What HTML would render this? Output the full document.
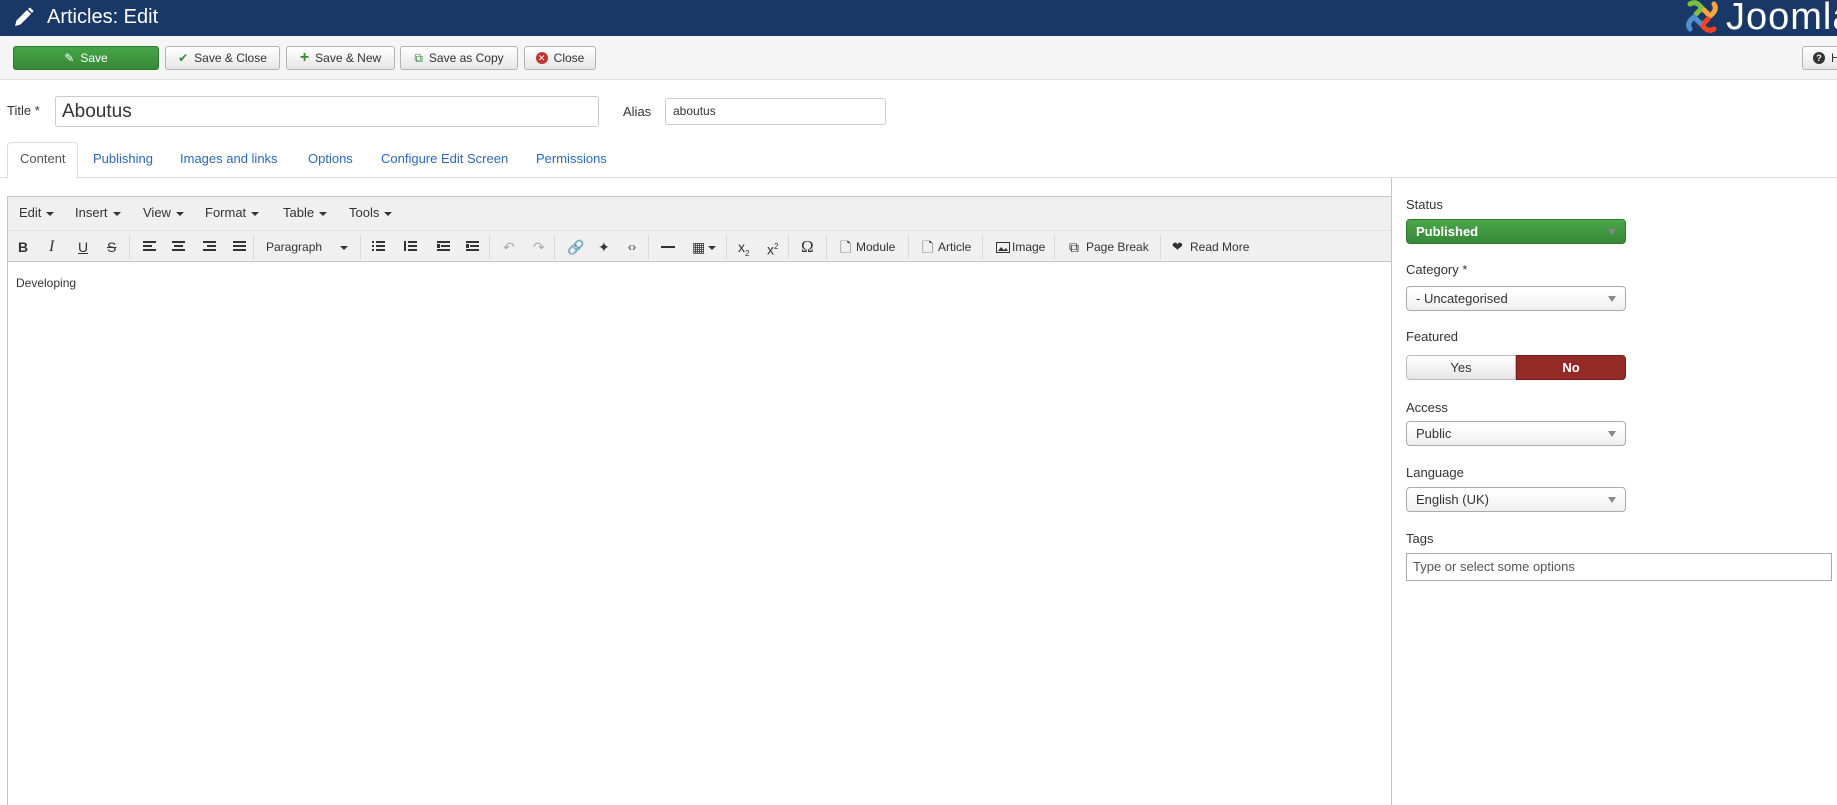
<!DOCTYPE html>
<html style="height:805px;overflow:hidden"><head><meta charset="utf-8"><style>
*{box-sizing:border-box;margin:0;padding:0}
body{width:1837px;height:805px;overflow:hidden;background:#fff;font-family:"Liberation Sans",Arial,sans-serif;color:#333;position:relative;font-size:14px}
.a{position:absolute}
.hdr{left:0;top:0;width:1837px;height:36px;background:#1a3867}
.tb{left:0;top:36px;width:1837px;height:44px;background:#f5f5f5;border-bottom:1px solid #ddd}
.btn{position:absolute;top:46px;height:24px;border:1px solid #b3b3b3;border-radius:3px;background:linear-gradient(#fff,#e6e6e6);font-size:12px;line-height:22px;color:#333;display:flex;align-items:center;justify-content:center;gap:6px}
.lbl{position:absolute;font-size:13px;color:#333}
.inp{position:absolute;border:1px solid #ccc;border-radius:3px;background:#fff}
.tab{position:absolute;top:151px;font-size:13px;color:#2a69b8}
.sel{position:absolute;left:1406px;width:220px;height:25px;border:1px solid #aaa;border-radius:4px;background:linear-gradient(#fff 20%,#eee);font-size:13px;line-height:23px;padding-left:9px;color:#333}
.sel:after{content:"";position:absolute;right:9px;top:9px;border:4px solid transparent;border-top:6px solid #888}
.mi{position:absolute;top:205px;font-size:13px;color:#333}
.car:after{content:"";display:inline-block;margin-left:5px;vertical-align:middle;border:4px solid transparent;border-top:4px solid #333;border-bottom:0}
.ic{position:absolute;top:238px;font-size:14px;color:#333;line-height:18px}
.sep{position:absolute;top:235px;width:1px;height:24px;background:#d9d9d9}
.t{position:absolute;top:240px;font-size:12px;color:#333}
</style></head><body>
<div class="a hdr"></div>
<svg class="a" style="left:12px;top:7px" width="22" height="22" viewBox="0 0 22 22"><path d="M3 19 L4.5 13.5 L15 3 L19 7 L8.5 17.5 Z" fill="#fff"/><path d="M16 2 L18 0.5 L21.5 4 L20 6 Z" fill="#fff"/></svg>
<div class="a" style="left:47px;top:6px;color:#fff;font-size:20px">Articles: Edit</div>
<svg class="a" style="left:1684px;top:0" width="36" height="33" viewBox="0 0 36 33">
<path d="M6 4 Q12 0 18 8 L12 14" stroke="#7ac143" stroke-width="5" fill="none" stroke-linecap="round"/>
<path d="M30 4 Q34 10 26 16 L20 10" stroke="#f9a541" stroke-width="5" fill="none" stroke-linecap="round"/>
<path d="M30 29 Q24 33 18 25 L24 19" stroke="#f44321" stroke-width="5" fill="none" stroke-linecap="round"/>
<path d="M6 29 Q2 23 10 17 L16 23" stroke="#5091cd" stroke-width="5" fill="none" stroke-linecap="round"/>
</svg>
<div class="a" style="left:1726px;top:-4px;color:#fff;font-size:38px;letter-spacing:1px">Joomla</div>
<div class="a tb"></div>
<div class="btn" style="left:13px;width:146px;background:linear-gradient(#46a546,#378837);border-color:#2f7a2f;color:#fff"><span style="font-size:12px">&#9998;</span>Save</div>
<div class="btn" style="left:165px;width:115px"><span style="color:#378837">&#10004;</span>Save &amp; Close</div>
<div class="btn" style="left:286px;width:109px"><span style="color:#378837;font-weight:bold;font-size:16px">+</span>Save &amp; New</div>
<div class="btn" style="left:400px;width:118px"><span style="color:#378837;font-size:12px">&#10697;</span>Save as Copy</div>
<div class="btn" style="left:524px;width:72px"><span style="display:inline-block;width:12px;height:12px;border-radius:50%;background:#bd362f;color:#fff;font-size:9px;line-height:12px;text-align:center">&#10005;</span>Close</div>
<div class="btn" style="left:1802px;width:60px;justify-content:flex-start;padding-left:10px"><span style="display:inline-block;width:12px;height:12px;border-radius:50%;background:#333;color:#fff;font-size:9px;line-height:12px;text-align:center;font-weight:bold">?</span>Help</div>

<div class="lbl" style="left:7px;top:103px">Title *</div>
<div class="inp" style="left:55px;top:96px;width:544px;height:31px;font-size:19px;line-height:29px;padding-left:6px">Aboutus</div>
<div class="lbl" style="left:623px;top:104px">Alias</div>
<div class="inp" style="left:665px;top:98px;width:221px;height:27px;font-size:12px;line-height:25px;padding-left:7px">aboutus</div>

<div class="a" style="left:0;top:177px;width:1837px;height:1px;background:#ddd"></div>
<div class="a" style="left:7px;top:142px;width:71px;height:37px;border:1px solid #ddd;border-bottom:1px solid #fff;border-radius:4px 4px 0 0;background:#fff"></div>
<div class="tab" style="left:20px;color:#555">Content</div>
<div class="tab" style="left:93px">Publishing</div>
<div class="tab" style="left:180px">Images and links</div>
<div class="tab" style="left:308px">Options</div>
<div class="tab" style="left:381px">Configure Edit Screen</div>
<div class="tab" style="left:536px">Permissions</div>

<div class="a" style="left:7px;top:196px;width:1385px;height:610px;border:1px solid #c5c5c5;background:#fff"></div>
<div class="a" style="left:8px;top:197px;width:1383px;height:65px;background:#f0f0f0;border-bottom:1px solid #c5c5c5"></div>
<div class="a" style="left:8px;top:230px;width:1383px;height:1px;background:#e2e2e2"></div>
<div class="mi car" style="left:19px">Edit</div>
<div class="mi car" style="left:75px">Insert</div>
<div class="mi car" style="left:143px">View</div>
<div class="mi car" style="left:205px">Format</div>
<div class="mi car" style="left:283px">Table</div>
<div class="mi car" style="left:349px">Tools</div>

<div class="ic" style="left:18px;font-weight:bold">B</div>
<div class="ic" style="left:49px;font-style:italic;font-family:'Liberation Serif',serif;font-size:16px">I</div>
<div class="ic" style="left:78px;text-decoration:underline">U</div>
<div class="ic" style="left:107px;text-decoration:line-through">S</div>
<div class="sep" style="left:129px"></div>
<svg class="a" style="left:143px;top:241px" width="110" height="12"><g fill="#333"><rect x="0" y="0" width="13" height="2"/><rect x="0" y="4" width="9" height="2"/><rect x="0" y="8" width="13" height="2"/><rect x="29" y="0" width="13" height="2"/><rect x="31" y="4" width="9" height="2"/><rect x="29" y="8" width="13" height="2"/><rect x="60" y="0" width="13" height="2"/><rect x="64" y="4" width="9" height="2"/><rect x="60" y="8" width="13" height="2"/><rect x="90" y="0" width="13" height="2"/><rect x="90" y="4" width="13" height="2"/><rect x="90" y="8" width="13" height="2"/></g></svg>
<div class="sep" style="left:253px"></div>
<div class="t" style="left:266px">Paragraph</div>
<div class="a" style="left:340px;top:246px;border:4px solid transparent;border-top:4px solid #333"></div>
<div class="sep" style="left:360px"></div>
<svg class="a" style="left:372px;top:241px" width="110" height="12"><g fill="#333"><rect x="0" y="0" width="2" height="2"/><rect x="4" y="0" width="9" height="2"/><rect x="0" y="4" width="2" height="2"/><rect x="4" y="4" width="9" height="2"/><rect x="0" y="8" width="2" height="2"/><rect x="4" y="8" width="9" height="2"/><rect x="32" y="0" width="2" height="10"/><rect x="36" y="0" width="9" height="2"/><rect x="36" y="4" width="9" height="2"/><rect x="36" y="8" width="9" height="2"/><rect x="65" y="0" width="13" height="2"/><rect x="69" y="4" width="9" height="2"/><rect x="65" y="8" width="13" height="2"/><rect x="65" y="3" width="3" height="4"/><rect x="94" y="0" width="13" height="2"/><rect x="98" y="4" width="9" height="2"/><rect x="94" y="8" width="13" height="2"/><rect x="94" y="3" width="3" height="4"/></g></svg>
<div class="sep" style="left:489px"></div>
<div class="ic" style="left:503px;color:#aaa">&#8630;</div>
<div class="ic" style="left:533px;color:#aaa">&#8631;</div>
<div class="sep" style="left:554px"></div>
<div class="ic" style="left:567px">&#128279;</div>
<div class="ic" style="left:598px">&#10022;</div>
<div class="ic" style="left:628px;font-size:12px">&lsaquo;&rsaquo;</div>
<div class="sep" style="left:648px"></div>
<div class="a" style="left:661px;top:246px;width:14px;height:2px;background:#333"></div>
<div class="ic" style="left:692px">&#9638;</div>
<div class="a" style="left:708px;top:246px;border:4px solid transparent;border-top:4px solid #333"></div>
<div class="sep" style="left:726px"></div>
<div class="ic" style="left:738px">x<sub style="font-size:8px">2</sub></div>
<div class="ic" style="left:767px">x<sup style="font-size:8px">2</sup></div>
<div class="sep" style="left:788px"></div>
<div class="ic" style="left:801px;font-size:17px;font-family:'Liberation Serif',serif">&Omega;</div>
<div class="sep" style="left:826px"></div>
<div class="ic" style="left:840px">&#128459;</div><div class="t" style="left:856px">Module</div>
<div class="sep" style="left:908px"></div>
<div class="ic" style="left:922px">&#128459;</div><div class="t" style="left:938px">Article</div>
<div class="sep" style="left:982px"></div>
<svg class="a" style="left:996px;top:242px" width="14" height="11"><rect x="0.5" y="0.5" width="13" height="10" fill="none" stroke="#333"/><path d="M2 9 L5 5 L8 8 L10 6 L12 9Z" fill="#333"/></svg><div class="t" style="left:1012px">Image</div>
<div class="sep" style="left:1054px"></div>
<div class="ic" style="left:1069px">&#10697;</div><div class="t" style="left:1086px">Page Break</div>
<div class="sep" style="left:1160px"></div>
<div class="ic" style="left:1172px;font-size:13px">&#10084;</div><div class="t" style="left:1190px">Read More</div>
<div class="a" style="left:16px;top:276px;font-size:12px">Developing</div>

<div class="a" style="left:1391px;top:178px;width:1px;height:627px;background:#c5c5c5"></div>
<div class="lbl" style="left:1406px;top:197px">Status</div>
<div class="sel" style="top:219px;background:linear-gradient(#4aa84a,#378837);border-color:#2f7a2f;color:#fff;font-weight:bold">Published</div>
<div class="lbl" style="left:1406px;top:262px">Category *</div>
<div class="sel" style="top:286px">- Uncategorised</div>
<div class="lbl" style="left:1406px;top:329px">Featured</div>
<div class="a" style="left:1406px;top:355px;width:110px;height:25px;border:1px solid #bbb;border-radius:4px 0 0 4px;background:linear-gradient(#fff,#e6e6e6);text-align:center;line-height:23px;font-size:13px">Yes</div>
<div class="a" style="left:1516px;top:355px;width:110px;height:25px;border:1px solid #7a1c17;border-radius:0 4px 4px 0;background:#942a25;color:#fff;font-weight:bold;text-align:center;line-height:23px;font-size:13px">No</div>
<div class="lbl" style="left:1406px;top:400px">Access</div>
<div class="sel" style="top:421px">Public</div>
<div class="lbl" style="left:1406px;top:465px">Language</div>
<div class="sel" style="top:487px">English (UK)</div>
<div class="lbl" style="left:1406px;top:531px">Tags</div>
<div class="a" style="left:1406px;top:553px;width:426px;height:28px;border:1px solid #aaa;font-size:13px;line-height:26px;padding-left:6px;color:#555">Type or select some options</div>
</body></html>
